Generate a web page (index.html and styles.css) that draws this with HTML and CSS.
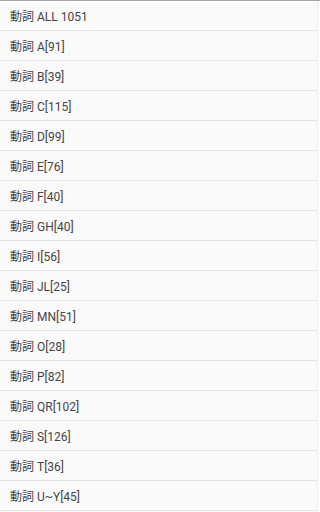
FILE: index.html
```html
<!DOCTYPE html>
<html>
<head>
<meta charset="utf-8">
<link rel="stylesheet" href="styles.css">
</head>
<body>
<div class="frame">
  <ul class="list">
    <li class="item">動詞 ALL 1051</li>
    <li class="item">動詞 A[91]</li>
    <li class="item">動詞 B[39]</li>
    <li class="item">動詞 C[115]</li>
    <li class="item">動詞 D[99]</li>
    <li class="item">動詞 E[76]</li>
    <li class="item">動詞 F[40]</li>
    <li class="item">動詞 GH[40]</li>
    <li class="item">動詞 I[56]</li>
    <li class="item">動詞 JL[25]</li>
    <li class="item">動詞 MN[51]</li>
    <li class="item">動詞 O[28]</li>
    <li class="item">動詞 P[82]</li>
    <li class="item">動詞 QR[102]</li>
    <li class="item">動詞 S[126]</li>
    <li class="item">動詞 T[36]</li>
    <li class="item">動詞 U~Y[45]</li>
  </ul>
  <div class="edge"></div>
</div>
</body>
</html>
```
FILE: styles.css
```css
html, body {
  margin: 0;
  padding: 0;
  background: #fafafa;
  height: 512px;
  overflow: hidden;
}
.frame {
  display: flex;
  border-top: 1px solid #a8a8a8;
  height: 511px;
}
.list {
  list-style: none;
  margin: 0;
  padding: 0;
  flex: 1;
  border-right: 1px solid #ececec;
}
.item {
  height: 29px;
  border-bottom: 1px solid #e2e2e2;
  display: flex;
  align-items: center;
  padding-left: 10px;
  font-family: Roboto, "Noto Sans CJK JP", sans-serif;
  font-size: 12px;
  color: #454545;
}
.edge {
  width: 2px;
  background: #fdfdfd;
}
```
